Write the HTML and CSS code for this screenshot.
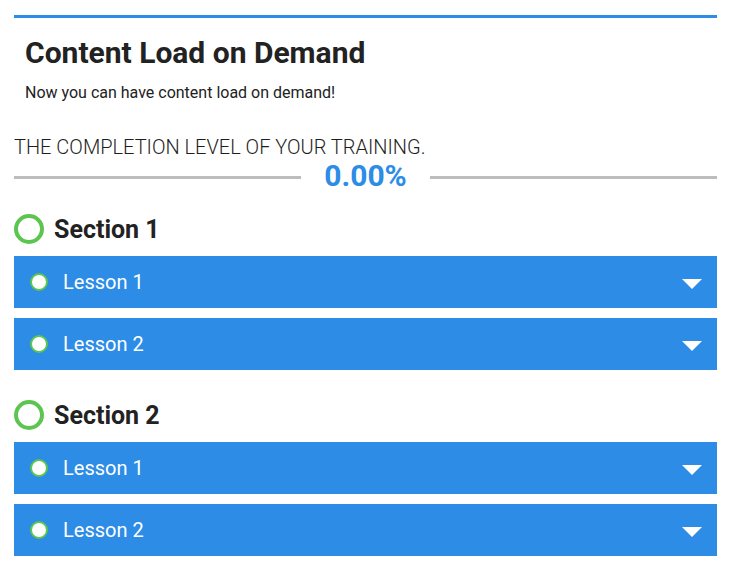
FILE: index.html
```html
<!DOCTYPE html>
<html lang="en">
<head>
  <meta charset="UTF-8">
  <title>Content Load on Demand</title>
  <meta name="viewport" content="width=device-width,initial-scale=1">
  <link rel="stylesheet" href="styles.css">
</head>
<body>

<div class="page">
  <div class="intro">
    <h1>Content Load on Demand</h1>
    <p>Now you can have content load on demand!</p>
  </div>

  <div class="progress">
    <div class="progress-label">THE COMPLETION LEVEL OF YOUR TRAINING.</div>
    <div class="progress-value">
      <span class="rule"></span>
      <span class="pct">0.00%</span>
      <span class="rule"></span>
    </div>
  </div>

  <div class="section">
    <div class="section-head"><span class="ring"></span>Section 1</div>
    <div class="lesson"><span class="dot"></span><span class="lesson-name">Lesson 1</span><span class="caret"></span></div>
    <div class="lesson"><span class="dot"></span><span class="lesson-name">Lesson 2</span><span class="caret"></span></div>
  </div>

  <div class="section">
    <div class="section-head"><span class="ring"></span>Section 2</div>
    <div class="lesson"><span class="dot"></span><span class="lesson-name">Lesson 1</span><span class="caret"></span></div>
    <div class="lesson"><span class="dot"></span><span class="lesson-name">Lesson 2</span><span class="caret"></span></div>
  </div>
</div>

</body>
</html>
```

FILE: styles.css
```css
body {
  margin: 0;
  background: #fff;
  color: #222;
  font-family: Roboto, "Liberation Sans", sans-serif;
}
.page {
  width: 703px;
  margin: 0 0 0 14px;
  padding-top: 15px;
}
.intro {
  border-top: 3px solid #2c8ce6;
  padding: 17px 11px 0;
}
h1 {
  margin: 0;
  font-size: 30px;
  font-weight: 700;
  line-height: 36px;
  color: #222;
}
.intro p {
  margin: 12px 0 0;
  font-size: 16px;
  line-height: 20px;
  color: #222;
}
.progress {
  margin-top: 32px;
}
.progress-label {
  font-size: 20px;
  line-height: 24px;
  font-weight: 300;
  color: #1e1e1e;
}
.progress-value {
  display: flex;
  align-items: center;
  gap: 23px;
  margin-top: 1px;
}
.rule {
  flex: 1;
  height: 3px;
  background: #bdbdbd;
  margin-top: 2px;
}
.pct {
  font-size: 30px;
  font-weight: 700;
  line-height: 32px;
  color: #2c8ce6;
}
.section {
  margin-top: 22px;
}
.section + .section {
  margin-top: 30px;
}
.section-head {
  display: flex;
  align-items: center;
  gap: 10px;
  font-size: 25px;
  font-weight: 700;
  height: 30px;
  margin-bottom: 12px;
}
.ring {
  width: 30px;
  height: 30px;
  box-sizing: border-box;
  border: 4px solid #5cc54f;
  border-radius: 50%;
}
.lesson {
  display: flex;
  align-items: center;
  height: 52px;
  padding: 0 15px 0 16px;
  margin-bottom: 10px;
  background: #2c8ce6;
  color: #fff;
}
.dot {
  width: 18px;
  height: 18px;
  box-sizing: border-box;
  border: 2px solid #5cc54f;
  border-radius: 50%;
  background: #fff;
}
.lesson-name {
  flex: 1;
  margin-left: 15px;
  font-size: 20px;
}
.caret {
  width: 0;
  height: 0;
  border-left: 10px solid transparent;
  border-right: 10px solid transparent;
  border-top: 10px solid #fff;
  margin-top: 3px;
}
```
